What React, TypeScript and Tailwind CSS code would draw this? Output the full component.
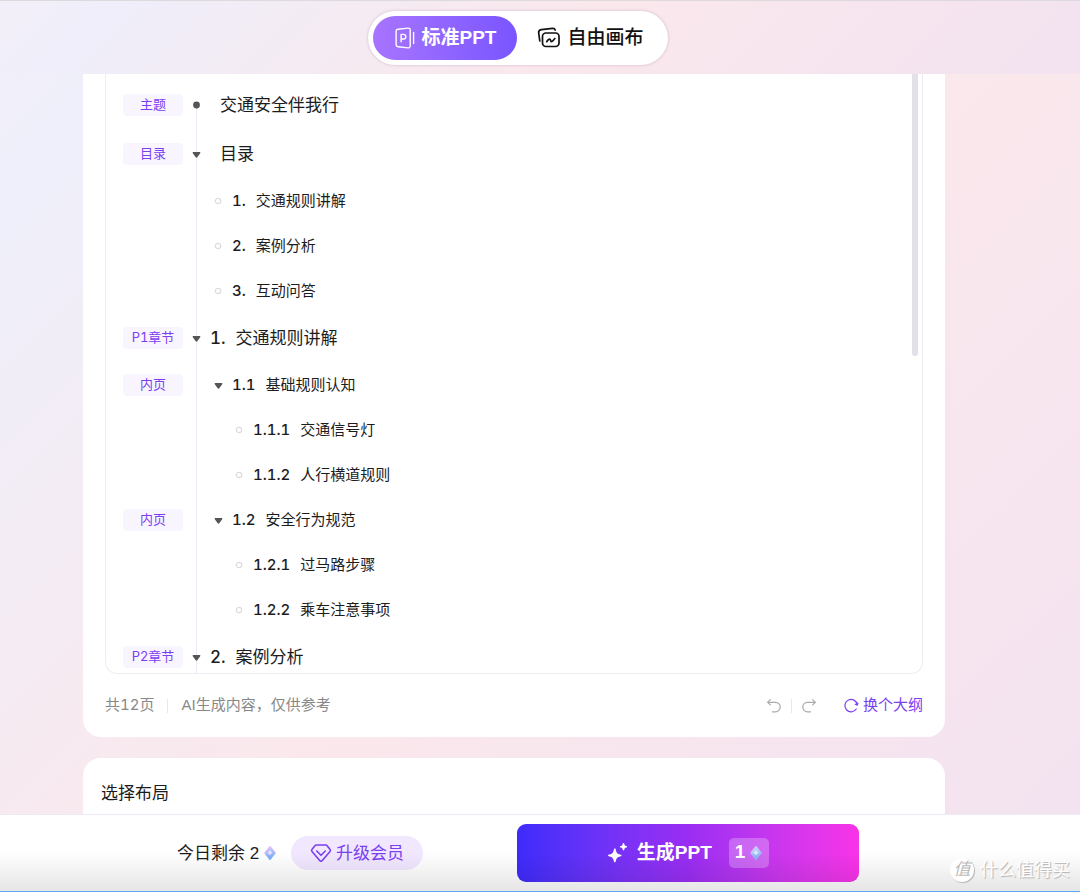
import React from "react";

type Row = {
  tag?: string;
  level: 0 | 1 | 2;
  marker: "dot" | "caret" | "ring";
  num?: string;
  text: string;
};

const ROWS: Row[] = [
  { tag: "主题", level: 0, marker: "dot", num: "", text: "交通安全伴我行" },
  { tag: "目录", level: 0, marker: "caret", num: "", text: "目录" },
  { level: 1, marker: "ring", num: "1.", text: "交通规则讲解" },
  { level: 1, marker: "ring", num: "2.", text: "案例分析" },
  { level: 1, marker: "ring", num: "3.", text: "互动问答" },
  { tag: "P1章节", level: 0, marker: "caret", num: "1.", text: "交通规则讲解" },
  { tag: "内页", level: 1, marker: "caret", num: "1.1", text: "基础规则认知" },
  { level: 2, marker: "ring", num: "1.1.1", text: "交通信号灯" },
  { level: 2, marker: "ring", num: "1.1.2", text: "人行横道规则" },
  { tag: "内页", level: 1, marker: "caret", num: "1.2", text: "安全行为规范" },
  { level: 2, marker: "ring", num: "1.2.1", text: "过马路步骤" },
  { level: 2, marker: "ring", num: "1.2.2", text: "乘车注意事项" },
  { tag: "P2章节", level: 0, marker: "caret", num: "2.", text: "案例分析" },
];

const INDENT = ["ml-[7px]", "ml-[29px]", "ml-[50px]"];

function Marker({ kind }: { kind: Row["marker"] }) {
  return (
    <svg viewBox="0 0 12 12" className="h-3 w-3" aria-hidden="true">
      {kind === "dot" && <circle cx="6.5" cy="6" r="3.4" fill="#555" />}
      {kind === "ring" && (
        <circle cx="6" cy="6" r="2.7" fill="#fff" stroke="#dcdcdc" strokeWidth="1.2" />
      )}
      {kind === "caret" && (
        <path
          d="M3.400 4h6.200c.7 0 1 .7.6 1.200L7.500 8.900a1.200 1.200 0 0 1-2 0L2.800 5.200C2.400 4.700 2.700 4 3.400 4Z"
          fill="#555"
        />
      )}
    </svg>
  );
}

function OutlineRow({ row }: { row: Row }) {
  const big = row.level === 0;
  return (
    <li className={`flex items-center ${big ? "h-[49px]" : "h-[45px]"}`}>
      <span className="w-[60px] shrink-0">
        {row.tag && (
          <span className="flex h-[22px] items-center justify-center rounded bg-[#f8f5ff] text-[13px] leading-none tabular-nums text-[#7b3ff2]">
            {row.tag}
          </span>
        )}
      </span>
      <span className={`shrink-0 ${INDENT[row.level]}`}>
        {row.marker === "caret" ? (
          <button type="button" aria-label={`折叠 ${row.text}`} className="block">
            <Marker kind="caret" />
          </button>
        ) : (
          <Marker kind={row.marker} />
        )}
      </span>
      <span
        className={`ml-2 flex items-center gap-2.5 whitespace-nowrap pt-0.5 text-[#1c1c1e] ${
          big ? "text-[17px]" : "text-[15px]"
        }`}
      >
        <span className="font-medium tabular-nums">{row.num}</span>
        <span>{row.text}</span>
      </span>
    </li>
  );
}

function PptIcon() {
  return (
    <svg viewBox="0 0 22 24" className="h-6 w-[22px]" fill="none" stroke="currentColor" strokeWidth="1.4" strokeLinecap="round" strokeLinejoin="round" aria-hidden="true">
      <path d="M4 3.300 13.900 2.100c1.300-.1 2.300.7 2.300 1.900v16c0 1.200-1 2-2.300 1.900L4 20.700c-1.200-.1-1.900-.9-1.900-1.900V5.200c0-1 .7-1.800 1.900-1.900Z" />
      <path d="M19.600 6.500v11" />
      <path d="M7.100 15.700V8.400h2.400a2.300 2.300 0 0 1 0 4.600H7.100" />
    </svg>
  );
}

function CanvasIcon() {
  return (
    <svg viewBox="0 0 24 22" className="h-[22px] w-6" fill="none" stroke="currentColor" strokeWidth="1.700" strokeLinecap="round" strokeLinejoin="round" aria-hidden="true">
      <rect x="5.500" y="6" width="16.500" height="13.500" rx="3.400" />
      <path d="M2.800 14 1.700 6.200C1.400 4.300 2.500 3 4.300 2.700l11.200-1.300c1.300-.1 2.300.5 2.700 1.600" />
      <path d="M9.700 14.700c1.300-2.200 2.700-3.100 3.500-2.200.8.900.3 2.200 1.400 2.200 1 0 1.600-1.500 3.300-3.200" />
    </svg>
  );
}

function UndoIcon({ flip = false }: { flip?: boolean }) {
  return (
    <svg viewBox="0 0 16 16" className={`h-4 w-4 ${flip ? "-scale-x-100" : ""}`} fill="none" stroke="currentColor" strokeWidth="1.200" strokeLinecap="round" strokeLinejoin="round" aria-hidden="true">
      <path d="M4.300 1.600 1.700 4.300l2.600 2.600" />
      <path d="M1.900 4.300h7.600a4.600 4.600 0 0 1 0 9.500H6.500" />
    </svg>
  );
}

function RefreshIcon() {
  return (
    <svg viewBox="0 0 16 16" className="h-4 w-4" fill="none" stroke="currentColor" strokeWidth="1.200" strokeLinecap="round" strokeLinejoin="round" aria-hidden="true">
      <path d="M14.200 6.600A6.200 6.200 0 1 0 13.300 11" />
      <path d="m12.300 6.200 2 .9.600-1.900" />
    </svg>
  );
}

function Gem({ id, from, to }: { id: string; from: string; to: string }) {
  return (
    <svg viewBox="0 0 14 16" className="h-4 w-3.5" aria-hidden="true">
      <defs>
        <linearGradient id={id} x1="0" y1="0" x2="0.3" y2="1">
          <stop offset="0" stopColor={from} />
          <stop offset="1" stopColor={to} />
        </linearGradient>
      </defs>
      <path d="M6.200 1.500a1 1 0 0 1 1.600 0l4.600 5.800a1 1 0 0 1 0 1.300l-4.600 5.900a1 1 0 0 1-1.600 0L1.600 8.600a1 1 0 0 1 0-1.300Z" fill={`url(#${id})`} />
      <path d="m7 5 2.300 3L7 10 4.700 8Z" fill="#fff" opacity=".6" />
      <path d="m1.500 8 5.500 2.500L12.500 8 7 15Z" fill="#6f9cf5" opacity=".2" />
    </svg>
  );
}

function VipIcon() {
  return (
    <svg viewBox="0 0 22 20" className="h-5 w-[22px]" fill="none" stroke="currentColor" strokeWidth="1.600" strokeLinecap="round" strokeLinejoin="round" aria-hidden="true">
      <path d="M6.400 2h9.200c.6 0 1 .2 1.300.6l3.200 4c.5.600.4 1.300-.1 1.900l-7.700 9c-.8.900-1.900.9-2.600 0L2 8.500c-.5-.6-.6-1.300-.1-1.900l3.200-4c.3-.4.700-.6 1.300-.6Z" />
      <path d="M6.700 8 11 12.300 15.300 8" />
    </svg>
  );
}

function SparkIcon() {
  return (
    <svg viewBox="0 0 22 22" className="h-[22px] w-[22px]" fill="currentColor" aria-hidden="true">
      <path d="M7.800 6.500c.7 0 .8.500 1 1.400.7 3 1.400 3.800 4.300 4.500.9.200 1.400.3 1.400 1s-.5.800-1.400 1c-2.900.7-3.600 1.500-4.300 4.500-.2.900-.3 1.400-1 1.400s-.8-.5-1-1.400c-.7-3-1.400-3.800-4.300-4.500-.9-.2-1.400-.3-1.400-1s.5-.8 1.400-1c2.900-.7 3.600-1.500 4.300-4.500.2-.9.300-1.400 1-1.400Z" />
      <path d="M16.500 1c.5 0 .7.300.8.900.3 1.400.6 1.700 1.900 2 .6.100 1 .3 1 .8s-.4.700-1 .8c-1.300.3-1.600.6-1.900 2-.1.600-.3.900-.8.900s-.7-.3-.8-.9c-.3-1.400-.6-1.700-1.900-2-.6-.1-1-.3-1-.8s.4-.7 1-.8c1.300-.3 1.600-.6 1.900-2 .1-.6.300-.9.800-.9Z" />
    </svg>
  );
}

export default function App() {
  return (
    <div className="flex h-screen flex-col overflow-hidden bg-[linear-gradient(135deg,#f3eff8_0%,#eeeffb_10%,#fae8ec_53%,#f3e3f0_95%)] font-[Inter,'Noto_Sans_CJK_SC',sans-serif] text-[#1c1c1e]">
      <header className="flex h-[74px] shrink-0 items-center justify-center border-t border-[#dddadd] bg-[linear-gradient(135deg,#f3eff8_0%,#efeefa_10%,#fae8ec_53%,#f3e3f0_95%)] pr-11">
        <nav className="flex h-[54px] items-center rounded-full bg-white p-[5px] font-['Liberation_Sans','Noto_Sans_CJK_SC',sans-serif] text-[19px] shadow-[0_0_3px_rgba(120,60,140,0.300)]">
          <button type="button" className="flex h-11 items-center gap-1.5 whitespace-nowrap rounded-full bg-linear-to-r from-[#a874ff] to-[#7a55ff] px-[21px] font-semibold text-white">
            <PptIcon />
            <span className="pt-0.5">标准PPT</span>
          </button>
          <button type="button" className="flex h-11 items-center gap-1.5 whitespace-nowrap rounded-full px-5 font-medium text-[#111]">
            <CanvasIcon />
            <span className="pt-0.5">自由画布</span>
          </button>
        </nav>
      </header>

      <main className="ml-[83px] mr-[135px] flex min-h-0 flex-1 flex-col gap-[21px] overflow-hidden">
        <section className="shrink-0 rounded-b-[18px] bg-white px-[22px]">
          <div className="relative h-[600px] overflow-hidden rounded-b-xl border-x border-b border-[#eeecf3] pl-[17px] pt-1.5">
            <div className="absolute bottom-0 left-[90px] top-[30px] w-px bg-[#eeebf8]" />
            <ul className="relative">
              {ROWS.map((row, i) => (
                <OutlineRow key={i} row={row} />
              ))}
            </ul>
            <div className="absolute right-1 top-0 h-[282px] w-1.5 rounded-b-full bg-[#e2e0e9]" />
          </div>
          <div className="flex h-[63px] items-center justify-between text-[15px] text-[#888]">
            <p className="flex items-center gap-[13px]">
              <span className="tabular-nums">共12页</span>
              <span className="h-3.5 w-px bg-[#e8e8e8]" />
              <span className="font-['Liberation_Sans','Noto_Sans_CJK_SC',sans-serif]">AI生成内容，仅供参考</span>
            </p>
            <div className="flex items-center text-[#aaa]">
              <button type="button" aria-label="撤销">
                <UndoIcon />
              </button>
              <span className="mx-[9px] h-3.5 w-px bg-[#e8e8e8]" />
              <button type="button" aria-label="重做">
                <UndoIcon flip />
              </button>
              <button type="button" className="ml-[26px] flex items-center gap-1 text-[#7b3ff2]">
                <RefreshIcon />
                换个大纲
              </button>
            </div>
          </div>
        </section>
        <section className="flex-1 rounded-t-[18px] bg-white px-[18px] pt-[23px]">
          <h2 className="text-[17px] leading-6">选择布局</h2>
        </section>
      </main>

      <footer className="relative flex h-[78px] shrink-0 items-center justify-center gap-[94px] border-t border-[#edeaf4] bg-white pb-0.5 pr-11 font-['Liberation_Sans','Noto_Sans_CJK_SC',sans-serif]">
        <div className="flex items-center text-[17px]">
          <span className="whitespace-nowrap pt-0.5">今日剩余 2</span>
          <span className="ml-1">
            <Gem id="gem-balance" from="#f3c3f5" to="#7db4fb" />
          </span>
          <button type="button" className="ml-3.5 flex h-[34px] items-center gap-1 whitespace-nowrap rounded-full bg-[#f1e7ff] px-[19px] text-[#7b3ff2]">
            <VipIcon />
            <span className="pt-0.5">升级会员</span>
          </button>
        </div>
        <button type="button" className="flex h-[58px] w-[342px] items-center justify-center rounded-[9px] bg-linear-to-r from-[#3d2bfb] via-[#9a2df3] to-[#f932e8] text-[19px] font-semibold text-white">
          <SparkIcon />
          <span className="ml-2 pt-0.5">生成PPT</span>
          <span className="ml-[17px] flex h-[30px] items-center gap-1 rounded-[5px] bg-white/25 px-1.5">
            1
            <Gem id="gem-cost" from="#d9d4ff" to="#8fb6f3" />
          </span>
        </button>
        <div className="pointer-events-none absolute inset-x-0 bottom-0 h-10 border-b border-[#62a9f5] bg-linear-to-b from-black/0 to-black/10" />
        <div className="pointer-events-none absolute bottom-2 right-2.5 flex items-center gap-1.5 whitespace-nowrap text-[18px] leading-7 text-white [text-shadow:1px_1px_1px_#b0b0b0]">
          <span className="flex h-6 w-6 items-center justify-center rounded-full bg-white text-[17px] italic text-[#bbb] shadow-[1px_1px_1px_#b8b8b8] [text-shadow:none]">
            值
          </span>
          什么值得买
        </div>
      </footer>
    </div>
  );
}
